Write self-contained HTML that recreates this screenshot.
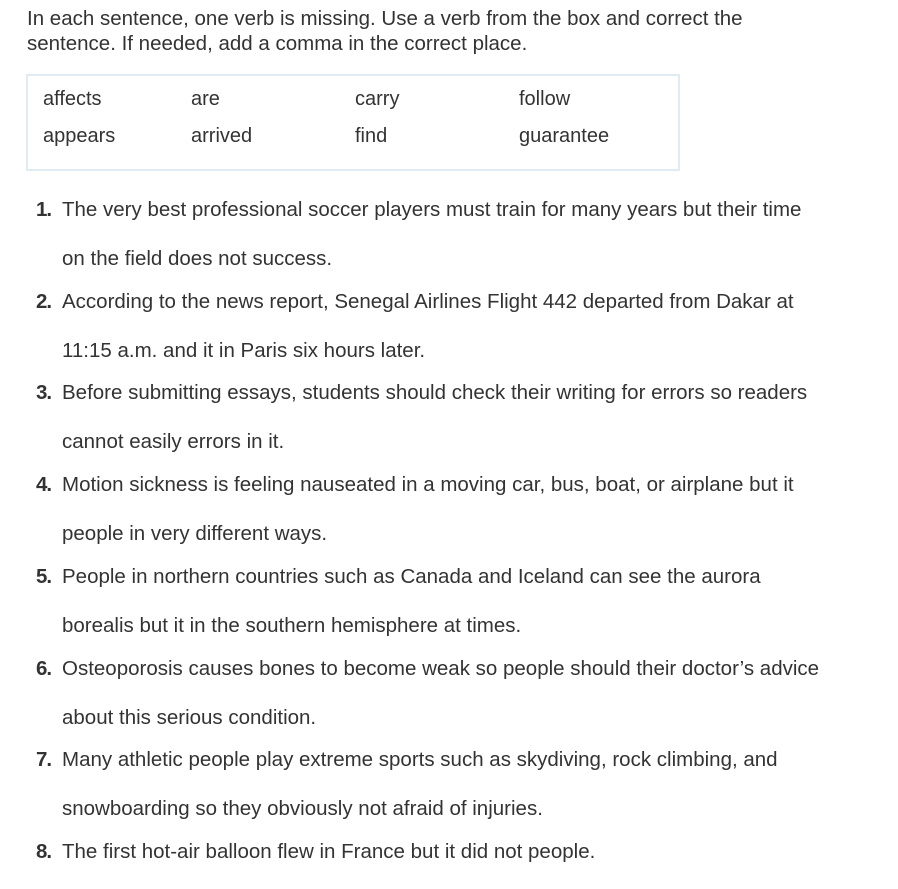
<!DOCTYPE html>
<html><head><style>
body{margin:0;background:#fff;color:#333;font-family:"Liberation Sans",sans-serif;font-size:20.5px;}
.intro{position:absolute;left:27px;top:7px;line-height:24.5px;width:870px;}
.box{position:absolute;left:26px;top:74px;width:650px;height:93px;border:2px solid #e1ecf2;}
.w{position:absolute;line-height:20px;font-size:20px;}
.it{position:absolute;left:0;width:898px;}
.it .n{position:absolute;left:36px;font-weight:bold;width:24px;letter-spacing:-1px;}
.it .t{position:absolute;left:62px;line-height:49px;width:835px;white-space:nowrap;}
</style></head><body>
<div class="intro">In each sentence, one verb is missing. Use a verb from the box and correct the<br>sentence. If needed, add a comma in the correct place.</div>
<div class="box">
<div class="w" style="left:15px;top:13px">affects</div>
<div class="w" style="left:163px;top:13px">are</div>
<div class="w" style="left:327px;top:13px">carry</div>
<div class="w" style="left:491px;top:13px">follow</div>
<div class="w" style="left:15px;top:50px">appears</div>
<div class="w" style="left:163px;top:50px">arrived</div>
<div class="w" style="left:327px;top:50px">find</div>
<div class="w" style="left:491px;top:50px">guarantee</div>
</div>
<div class="it" style="top:185px"><span class="n" style="top:13px">1.</span><div class="t">The very best professional soccer players must train for many years but their time<br>on the field does not success.</div></div>
<div class="it" style="top:277px"><span class="n" style="top:13px">2.</span><div class="t">According to the news report, Senegal Airlines Flight 442 departed from Dakar at<br>11:15 a.m. and it in Paris six hours later.</div></div>
<div class="it" style="top:368px"><span class="n" style="top:13px">3.</span><div class="t">Before submitting essays, students should check their writing for errors so readers<br>cannot easily errors in it.</div></div>
<div class="it" style="top:460px"><span class="n" style="top:13px">4.</span><div class="t">Motion sickness is feeling nauseated in a moving car, bus, boat, or airplane but it<br>people in very different ways.</div></div>
<div class="it" style="top:552px"><span class="n" style="top:13px">5.</span><div class="t">People in northern countries such as Canada and Iceland can see the aurora<br>borealis but it in the southern hemisphere at times.</div></div>
<div class="it" style="top:644px"><span class="n" style="top:13px">6.</span><div class="t">Osteoporosis causes bones to become weak so people should their doctor’s advice<br>about this serious condition.</div></div>
<div class="it" style="top:735px"><span class="n" style="top:13px">7.</span><div class="t">Many athletic people play extreme sports such as skydiving, rock climbing, and<br>snowboarding so they obviously not afraid of injuries.</div></div>
<div class="it" style="top:827px"><span class="n" style="top:13px">8.</span><div class="t">The first hot-air balloon flew in France but it did not people.</div></div>
</body></html>
